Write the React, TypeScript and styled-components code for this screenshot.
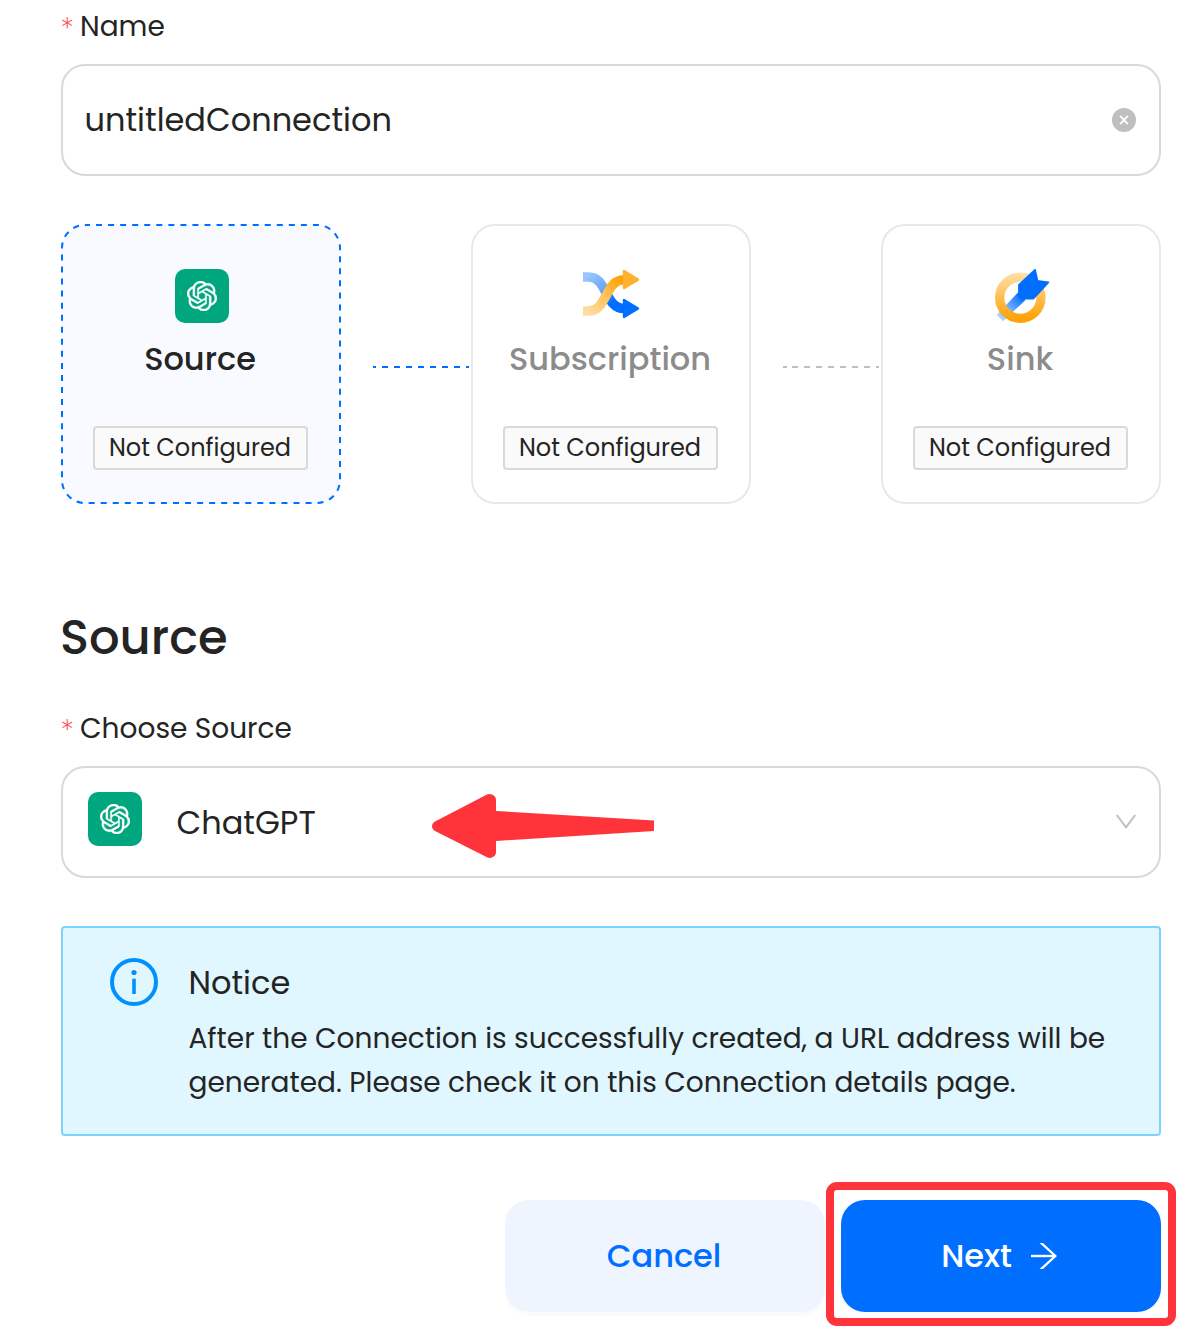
import React from "react";
import styled, { createGlobalStyle } from "styled-components";
import { SiOpenai } from "react-icons/si";

const GlobalStyle = createGlobalStyle`
  * { box-sizing: border-box; }
  body {
    margin: 0;
    background: #fff;
    color: #242424;
    font-family: Poppins, Inter, "Open Sans", sans-serif;
  }
`;

const Page = styled.main`
  display: flex;
  flex-direction: column;
  width: 1188px;
  height: 1344px;
  padding: 4px 27px 0 61px;
  overflow: hidden;
`;

const Text = styled.span<{ $size: number; $weight?: number; $color?: string }>`
  font-size: ${(p) => p.$size}px;
  font-weight: ${(p) => p.$weight ?? 400};
  color: ${(p) => p.$color ?? "inherit"};
  white-space: nowrap;
`;

const Label = styled.label`
  display: flex;
  align-items: center;
  height: 44px;
  margin-bottom: 16px;
  padding-top: 2px;
  line-height: 44px;
`;

const Required = styled.span`
  width: 19.5px;
  margin-left: -0.5px;
  padding-top: 2px;
  color: #ff4d4f;
  font-family: Inter, sans-serif;
  font-size: 27px;
  font-weight: 200;
`;

const Field = styled.div`
  position: relative;
  display: flex;
  align-items: center;
  height: 112px;
  padding: 0 23px 0 21.5px;
  border: 2px solid #d9d9d9;
  border-radius: 24px;
  line-height: 48px;
`;

const Trailing = styled.span<{ $shift?: number }>`
  display: flex;
  margin-left: auto;
  margin-right: ${(p) => -(p.$shift ?? 0)}px;
`;

const Steps = styled.div`
  display: flex;
  margin-top: 48px;
`;

const Card = styled.section<{ $active?: boolean }>`
  position: relative;
  display: flex;
  flex-direction: column;
  align-items: center;
  width: 280px;
  height: 280px;
  padding: 42px 2px 0 0;
  border: 2px solid ${(p) => (p.$active ? "transparent" : "#e8e8e8")};
  border-radius: 24px;
  background: ${(p) => (p.$active ? "#f9faff" : "#fff")};
`;

const Dashes = styled.svg`
  position: absolute;
  inset: -2px;
`;

const CardIcon = styled.div<{ $lift?: number }>`
  display: flex;
  align-items: center;
  justify-content: center;
  height: 55px;
  padding-left: ${(p) => (p.$lift ? 2 : 4)}px;
  padding-bottom: ${(p) => (p.$lift ?? 0) * 2}px;
`;

const CardTitle = styled.div`
  height: 48px;
  margin-top: 12px;
  line-height: 48px;
`;

const Tag = styled.div`
  display: flex;
  align-items: center;
  justify-content: center;
  width: 215px;
  height: 44px;
  margin-top: 43px;
  padding-bottom: 1px;
  border: 2px solid #d9d9d9;
  border-radius: 4px;
  background: #fafafa;
`;

const Connector = styled.div<{ $color: string }>`
  width: 96px;
  height: 2px;
  margin: 142px 2px 0 32px;
  background: repeating-linear-gradient(
    90deg,
    ${(p) => p.$color} 0 6px,
    transparent 6px 11.9px
  ) -2.5px 0 / 110px 2px no-repeat;
`;

const Badge = styled.span`
  display: flex;
  align-items: center;
  justify-content: center;
  width: 54px;
  height: 54px;
  border-radius: 10px;
  background: #00a67e;
  color: #fff;
`;

const Heading = styled.h2`
  height: 72px;
  margin: 98px 0 32px -1px;
  font-weight: 500;
  line-height: 72px;
`;

const SelectValue = styled.div`
  display: flex;
  align-items: center;
  gap: 34.5px;
  padding: 2px 0 0 3.5px;

  ${Badge} {
    margin-top: -8px;
  }
`;

const Pointer = styled.svg`
  position: absolute;
  left: 368px;
  top: 24px;
`;

const Notice = styled.section`
  display: flex;
  gap: 30.5px;
  height: 210px;
  margin-top: 48px;
  padding: 30px 0 0 47px;
  border: 2px solid #7dd3ff;
  border-radius: 4px;
  background: #e0f7ff;
`;

const NoticeBody = styled.div`
  display: flex;
  flex-direction: column;
  line-height: 44px;
`;

const NoticeTitle = styled.div`
  height: 48px;
  margin-bottom: 11px;
  line-height: 50px;
`;

const Actions = styled.footer`
  display: flex;
  justify-content: flex-end;
  gap: 16px;
  margin-top: 64px;
`;

const Button = styled.button<{ $primary?: boolean }>`
  display: flex;
  align-items: center;
  justify-content: center;
  gap: 18px;
  width: 320px;
  height: 112px;
  padding: 0 ${(p) => (p.$primary ? 3 : 2)}px 0 0;
  border: 0;
  border-radius: 24px;
  background: ${(p) => (p.$primary ? "#006eff" : "#eff5ff")};
  color: ${(p) => (p.$primary ? "#fff" : "#006eff")};
  box-shadow: 0 4px 0 rgba(0, 0, 0, 0.015);
  font-family: inherit;
`;

const Highlight = styled.div`
  position: relative;

  &::after {
    content: "";
    position: absolute;
    inset: -18px -15px -14px;
    border: 8px solid #ff333a;
    border-radius: 11px;
    pointer-events: none;
  }
`;

const ChatGptBadge = () => (
  <Badge>
    <SiOpenai size={30} stroke="#fff" strokeWidth={0.3} />
  </Badge>
);

const SubscriptionIcon = () => (
  <svg width="58" height="54" viewBox="12 12 58 54" fill="none">
    <defs>
      <linearGradient id="subBlue" x1="13" y1="18" x2="46" y2="54" gradientUnits="userSpaceOnUse">
        <stop offset="0.1" stopColor="#9ac6ff" />
        <stop offset="0.5" stopColor="#6aa8ff" />
        <stop offset="0.85" stopColor="#006eff" />
      </linearGradient>
      <linearGradient id="subGold" x1="13" y1="60" x2="50" y2="22" gradientUnits="userSpaceOnUse">
        <stop offset="0.1" stopColor="#ffdda2" />
        <stop offset="0.55" stopColor="#ffc35c" />
        <stop offset="1" stopColor="#ff9f00" />
      </linearGradient>
    </defs>
    <path d="M13 22H19C37 22 35 53.500 54 53.500" stroke="url(#subBlue)" strokeWidth="9.6" />
    <path d="M54 45L68 53.500L54 62Z" fill="#006eff" stroke="#006eff" strokeWidth="2.4" strokeLinejoin="round" />
    <path d="M13 56H19C37 56 35 24.700 54 24.700" stroke="url(#subGold)" strokeWidth="9.6" />
    <path d="M54 16L68 24.600L54 33Z" fill="#ffb02e" stroke="#ffb02e" strokeWidth="2.4" strokeLinejoin="round" />
  </svg>
);

const SinkIcon = () => (
  <svg width="56" height="56" viewBox="14 13 56 56" fill="none">
    <defs>
      <linearGradient id="sinkRing" x1="40" y1="17" x2="40" y2="68" gradientUnits="userSpaceOnUse">
        <stop stopColor="#ffe2b0" />
        <stop offset="0.9" stopColor="#ffa20a" />
      </linearGradient>
      <linearGradient id="sinkStem" x1="19" y1="63" x2="42" y2="41" gradientUnits="userSpaceOnUse">
        <stop stopColor="#b5d6ff" />
        <stop offset="0.4" stopColor="#7db4ff" />
        <stop offset="1" stopColor="#006eff" />
      </linearGradient>
    </defs>
    <path d="M38 37.500L45.500 45L23 66.200L16.600 60Z" fill="url(#sinkStem)" />
    <circle cx="40.3" cy="42.7" r="20.6" stroke="url(#sinkRing)" strokeWidth="9.3" />
    <path d="M39 29.800L55 14.800L57.500 26L68.300 27.500L53.500 43.500H41.500L39 41Z" fill="#006eff" stroke="#006eff" strokeWidth="1.8" strokeLinejoin="round" />
  </svg>
);

const ClearIcon = () => (
  <svg width="24" height="24" viewBox="0 0 24 24">
    <circle cx="12" cy="12" r="12" fill="#bfbfbf" />
    <path d="M8.200 7.800L15.800 16.200M15.800 7.800L8.200 16.200" stroke="#fff" strokeWidth="1.8" />
  </svg>
);

const ChevronIcon = () => (
  <svg width="22" height="16" viewBox="0 0 22 16" fill="none">
    <path d="M1.800 1L11 13.300L20.200 1" stroke="#bfbfbf" strokeWidth="2" />
  </svg>
);

const InfoIcon = () => (
  <svg width="48" height="48" viewBox="0 0 48 48" fill="none">
    <circle cx="24" cy="24" r="22" stroke="#0091ff" strokeWidth="4" />
    <circle cx="24" cy="14.5" r="2.6" fill="#0091ff" />
    <path d="M24 20.700V36" stroke="#0091ff" strokeWidth="3.6" />
  </svg>
);

const NextIcon = () => (
  <svg width="28" height="28" viewBox="0 0 28 28" fill="none">
    <path d="M1 14H25.500" stroke="#fff" strokeWidth="2.4" />
    <path d="M9.500 1H13L27 14L13 27H9.500L23.700 14Z" fill="#fff" />
  </svg>
);

const steps = [
  { title: "Source", icon: <ChatGptBadge />, active: true, lift: 0, line: "#006eff" },
  { title: "Subscription", icon: <SubscriptionIcon />, active: false, lift: 2, line: "#bfbfbf" },
  { title: "Sink", icon: <SinkIcon />, active: false, lift: 0, line: "" },
];

export default function App() {
  return (
    <>
      <GlobalStyle />
      <Page>
        <Label>
          <Required>*</Required>
          <Text $size={28}>Name</Text>
        </Label>
        <Field>
          <Text $size={32}>untitledConnection</Text>
          <Trailing>
            <ClearIcon />
          </Trailing>
        </Field>

        <Steps>
          {steps.map((s) => (
            <React.Fragment key={s.title}>
              <Card $active={s.active}>
                {s.active && (
                  <Dashes width="280" height="280" fill="none">
                    <rect
                      x="1"
                      y="1"
                      width="278"
                      height="278"
                      rx="23"
                      stroke="#006eff"
                      strokeWidth="2"
                      strokeDasharray="6 6.05"
                      strokeDashoffset="1"
                    />
                  </Dashes>
                )}
                <CardIcon $lift={s.lift}>{s.icon}</CardIcon>
                <CardTitle>
                  <Text $size={32} $weight={500} $color={s.active ? undefined : "#8c8c8c"}>
                    {s.title}
                  </Text>
                </CardTitle>
                <Tag>
                  <Text $size={24}>Not Configured</Text>
                </Tag>
              </Card>
              {s.line && <Connector $color={s.line} />}
            </React.Fragment>
          ))}
        </Steps>

        <Heading>
          <Text $size={48} $weight={500}>Source</Text>
        </Heading>

        <Label>
          <Required>*</Required>
          <Text $size={28}>Choose Source</Text>
        </Label>
        <Field>
          <SelectValue>
            <ChatGptBadge />
            <Text $size={32}>ChatGPT</Text>
          </SelectValue>
          <Pointer width="223" height="66" viewBox="0 0 223 66">
            <path
              d="M5 29L56 2.600Q58.500 1.400 61 2.500Q65 4.200 65 8V19L223 28.500V39L65 49V60Q65 64 61 65.500Q58.500 66.500 56 65.200L5 39.500Q1 37.500 1 34.200Q1 31 5 29Z"
              fill="#ff333a"
            />
          </Pointer>
          <Trailing $shift={1}>
            <ChevronIcon />
          </Trailing>
        </Field>

        <Notice>
          <InfoIcon />
          <NoticeBody>
            <NoticeTitle>
              <Text $size={32}>Notice</Text>
            </NoticeTitle>
            <Text $size={28}>After the Connection is successfully created, a URL address will be</Text>
            <Text $size={28}>generated. Please check it on this Connection details page.</Text>
          </NoticeBody>
        </Notice>

        <Actions>
          <Button>
            <Text $size={32} $weight={500}>Cancel</Text>
          </Button>
          <Highlight>
            <Button $primary>
              <Text $size={32} $weight={500}>Next</Text>
              <NextIcon />
            </Button>
          </Highlight>
        </Actions>
      </Page>
    </>
  );
}
